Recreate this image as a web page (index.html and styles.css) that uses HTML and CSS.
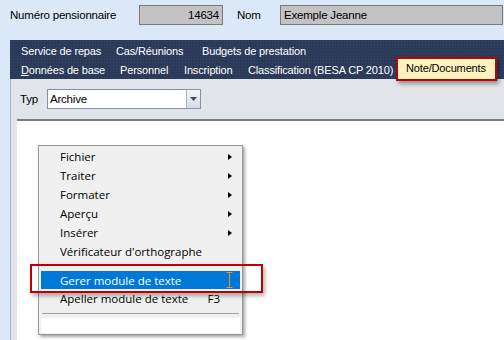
FILE: index.html
```html
<!DOCTYPE html>
<html>
<head>
<meta charset="utf-8">
<link rel="stylesheet" href="styles.css">
</head>
<body>
<div class="top">
  <span class="lbl lbl-num">Numéro pensionnaire</span>
  <div class="field field-num">14634</div>
  <span class="lbl lbl-nom">Nom</span>
  <div class="field field-name">Exemple Jeanne</div>
</div>
<div class="tabs">
  <div class="tabrow row1">
    <span class="t-service">Service de repas</span>
    <span class="t-cas">Cas/Réunions</span>
    <span>Budgets de prestation</span>
  </div>
  <div class="tabrow row2">
    <span class="t-donnees"><u>D</u>onnées de base</span>
    <span class="t-personnel">Personnel</span>
    <span class="t-inscription">Inscription</span>
    <span class="t-classif">Classification (BESA CP 2010)</span>
    <span class="active">Note/Documents</span>
  </div>
</div>
<div class="page">
  <div class="typrow">
    <span class="lbl">Typ</span>
    <div class="combo"><span class="combo-text">Archive</span><span class="combo-btn"><svg width="7" height="4" viewBox="0 0 7 4"><path d="M0 0H7L3.5 4Z" fill="#3c4a60"/></svg></span></div>
  </div>
  <div class="content"></div>
</div>

<div class="menu">
  <div class="mi"><span>Fichier</span><span class="arr"></span></div>
  <div class="mi"><span>Traiter</span><span class="arr"></span></div>
  <div class="mi"><span>Formater</span><span class="arr"></span></div>
  <div class="mi"><span>Aperçu</span><span class="arr"></span></div>
  <div class="mi"><span>Insérer</span><span class="arr"></span></div>
  <div class="mi"><span>Vérificateur d'orthographe</span></div>
  <div class="mi sel"><span>Gerer module de texte</span><svg class="ibeam" width="7" height="16" viewBox="0 0 7 16"><path d="M0.5 0.5H6.5M3.5 0.5V15.5M0.5 15.5H6.5" stroke="#f08a24" stroke-width="1" fill="none"/></svg></div>
  <div class="mi"><span>Apeller module de texte</span><span class="key">F3</span></div>
  <div class="sep"></div>
  <div class="blank"></div>
</div>
<div class="redbox"></div>
</body>
</html>
```
FILE: styles.css
```css
html, body {
  margin: 0;
  padding: 0;
}
body {
  width: 504px;
  height: 340px;
  overflow: hidden;
  background: #dbe8f8;
  font-family: "Liberation Sans", Arial, sans-serif;
  font-size: 11px;
  color: #000;
  position: relative;
}
.top {
  display: flex;
  align-items: center;
  height: 30px;
  padding-left: 10px;
  font-size: 11.5px;
  letter-spacing: -0.2px;
}
.lbl-num { width: 129px; white-space: nowrap; }
.field {
  box-sizing: border-box;
  height: 20px;
  border: 1px solid #7a7a7a;
  background: #c3c3c3;
  line-height: 18px;
  padding: 0 3px;
}
.field-num {
  width: 84px;
  text-align: right;
}
.lbl-nom { margin-left: 14px; width: 43px; }
.field-name { flex: 1; margin-right: 1px; }

.tabs {
  margin: 10px 0 0 10px;
  height: 39px;
  background-color: #2b3a57;
  background-image: radial-gradient(#34466a 0.6px, transparent 0.9px);
  background-size: 3px 3px;
  color: #fff;
  box-sizing: border-box;
  padding: 2px 0 0 11px;
  font-size: 11px;
  letter-spacing: -0.15px;
}
.tabrow {
  display: flex;
  height: 19px;
  line-height: 19px;
  white-space: nowrap;
}
.tabrow span { flex: none; }
.t-service { width: 95px; }
.t-cas { width: 86px; }
.t-donnees { width: 99px; }
.t-personnel { width: 64px; }
.t-inscription { width: 64px; }
.t-classif { width: 148px; }
.row2 .active {
  background: #fff3bf;
  color: #000;
  border: 2px solid #c00000;
  padding: 0 0 0 8px;
  width: 89px;
  height: 20px;
  line-height: 19px;
  margin-top: -4px;
  box-shadow: 2px 3px 4px rgba(0,0,0,0.35);
  position: relative;
}
.page {
  margin-left: 10px;
  background: #e1e4e9;
  height: 261px;
  border-left: 1px solid #a9b3c4;
  box-sizing: border-box;
  padding-left: 6px;
}
.typrow {
  display: flex;
  align-items: center;
  height: 40px;
  padding-left: 3px;
  font-size: 11.5px;
  letter-spacing: -0.2px;
}
.combo {
  margin-left: 9px;
  width: 154px;
  height: 20px;
  box-sizing: border-box;
  border: 1px solid #8592a8;
  background: #fff;
  display: flex;
}
.combo-text {
  flex: 1;
  line-height: 18px;
  padding-left: 2px;
}
.combo-btn {
  width: 13px;
  border-left: 1px solid #aab4c4;
  background: linear-gradient(#f2f4f7, #d8dde5);
  display: flex;
  align-items: center;
  justify-content: center;
}
.content {
  background: #fff;
  border-top: 2px solid #7d7d7d;
  height: 221px;
}

.menu {
  position: absolute;
  left: 38px;
  top: 145px;
  width: 205px;
  height: 190px;
  box-sizing: border-box;
  background: #f0f0f0;
  border: 1px solid #979797;
  box-shadow: 2px 2px 3px rgba(0,0,0,0.35);
  padding: 1px 2px 0 2px;
  font-family: "Open Sans", "Liberation Sans", sans-serif;
  font-size: 11.5px;
}
.mi {
  display: flex;
  align-items: center;
  height: 19px;
  padding-left: 19px;
  padding-right: 8px;
  position: relative;
}
.mi span:first-child { flex: 1; white-space: nowrap; }
.arr {
  width: 0;
  height: 0;
  border-top: 3.5px solid transparent;
  border-bottom: 3.5px solid transparent;
  border-left: 4px solid #000;
}
.mi:nth-child(6) { margin-bottom: 10px; }
.sel {
  background: #0078d7;
  color: #fff;
  height: 18px;
}
.ibeam { margin-right: -1px; }
.key { margin-right: 12px; flex: none; }
.sep {
  height: 1px;
  background: #a0a0a0;
  margin: 5px 1px 4px 1px;
}
.blank {
  height: 15px;
  background: #fff;
}
.redbox {
  position: absolute;
  left: 30px;
  top: 264px;
  width: 233px;
  height: 29px;
  box-sizing: border-box;
  border: 2px solid #c00000;
  box-shadow: 2px 3px 4px rgba(0,0,0,0.3);
}
```
